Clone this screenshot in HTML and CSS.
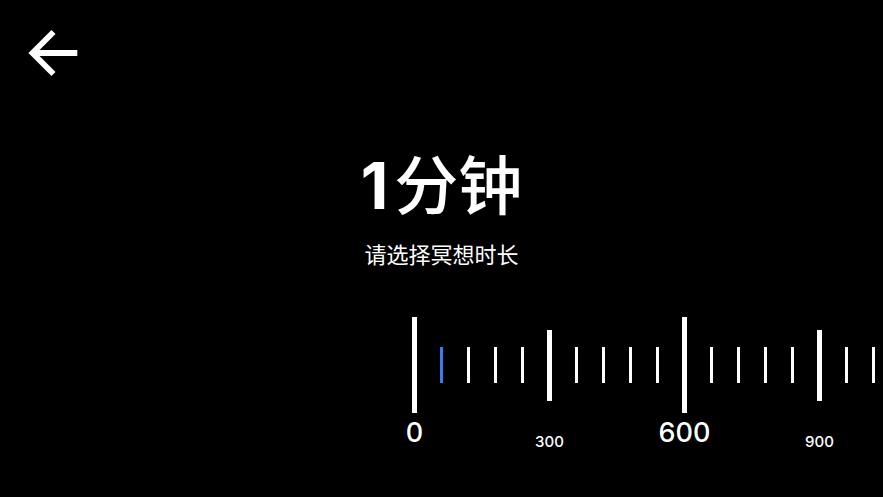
FILE: index.html
```html
<!DOCTYPE html>
<html lang="zh-CN">
<head>
<meta charset="utf-8">
<title>冥想时长</title>
<link rel="stylesheet" href="styles.css">
</head>
<body>
<div class="page">
  <header class="header">
    <svg class="back" width="50" height="50" viewBox="0 0 50 50" aria-label="返回">
      <path d="M49.3 25 H6 M25.5 4 L4.5 25 L25.5 46" fill="none" stroke="#fff" stroke-width="5.8" stroke-linecap="butt" stroke-linejoin="miter"/>
    </svg>
  </header>
  <h1 class="title"><span class="num">1</span>分钟</h1>
  <p class="subtitle">请选择冥想时长</p>
  <div class="ruler">
    <div class="slot"><div class="tickbox"><span class="tick big"></span></div><span class="label big-label">0</span></div>
    <div class="slot"><div class="tickbox"><span class="tick small active"></span></div></div>
    <div class="slot"><div class="tickbox"><span class="tick small"></span></div></div>
    <div class="slot"><div class="tickbox"><span class="tick small"></span></div></div>
    <div class="slot"><div class="tickbox"><span class="tick small"></span></div></div>
    <div class="slot"><div class="tickbox"><span class="tick medium"></span></div><span class="label small-label">300</span></div>
    <div class="slot"><div class="tickbox"><span class="tick small"></span></div></div>
    <div class="slot"><div class="tickbox"><span class="tick small"></span></div></div>
    <div class="slot"><div class="tickbox"><span class="tick small"></span></div></div>
    <div class="slot"><div class="tickbox"><span class="tick small"></span></div></div>
    <div class="slot"><div class="tickbox"><span class="tick big"></span></div><span class="label big-label">600</span></div>
    <div class="slot"><div class="tickbox"><span class="tick small"></span></div></div>
    <div class="slot"><div class="tickbox"><span class="tick small"></span></div></div>
    <div class="slot"><div class="tickbox"><span class="tick small"></span></div></div>
    <div class="slot"><div class="tickbox"><span class="tick small"></span></div></div>
    <div class="slot"><div class="tickbox"><span class="tick medium"></span></div><span class="label small-label">900</span></div>
    <div class="slot"><div class="tickbox"><span class="tick small"></span></div></div>
    <div class="slot"><div class="tickbox"><span class="tick small"></span></div></div>
    <div class="slot"><div class="tickbox"><span class="tick small"></span></div></div>
  </div>
</div>
</body>
</html>
```

FILE: styles.css
```css
html, body {
  margin: 0;
  padding: 0;
  background: #000;
}
body {
  width: 883px;
  height: 497px;
  overflow: hidden;
  color: #fff;
  font-family: "Inter", "Noto Sans CJK SC", sans-serif;
}
.page {
  display: flex;
  flex-direction: column;
  align-items: stretch;
}
.header {
  padding: 28px 0 0 28px;
  height: 50px;
}
.back {
  display: block;
}
.title {
  margin: 68px 0 0;
  text-align: center;
  font-family: "Noto Sans CJK SC", sans-serif;
  font-weight: 500;
  font-size: 64px;
  line-height: 70px;
  height: 70px;
}
.title .num {
  font-family: "Inter", sans-serif;
  font-weight: 700;
  margin-right: 6px;
}
.subtitle {
  margin: 22px 0 0;
  text-align: center;
  font-family: "Noto Sans CJK SC", sans-serif;
  font-weight: 400;
  font-size: 22px;
  line-height: 30px;
  height: 30px;
}
.ruler {
  margin-top: 49px;
  padding-left: 382.5px;
  padding-bottom: 8px;
  display: flex;
  overflow: hidden;
}
.slot {
  flex: none;
  width: 64px;
  margin-right: -37px;
  display: flex;
  flex-direction: column;
  align-items: center;
}
.tickbox {
  height: 96px;
  display: flex;
  align-items: center;
  justify-content: center;
}
.tick {
  display: block;
  background: #fff;
}
.tick.big {
  width: 5px;
  height: 96px;
}
.tick.medium {
  width: 5px;
  height: 71px;
}
.tick.small {
  width: 3px;
  height: 36px;
}
.tick.active {
  background: #3a7bf0;
}
.label {
  white-space: nowrap;
  line-height: normal;
  font-weight: 500;
}
.big-label {
  font-size: 27px;
  margin-top: 3px;
}
.small-label {
  font-size: 15px;
  margin-top: 18.5px;
}
```
